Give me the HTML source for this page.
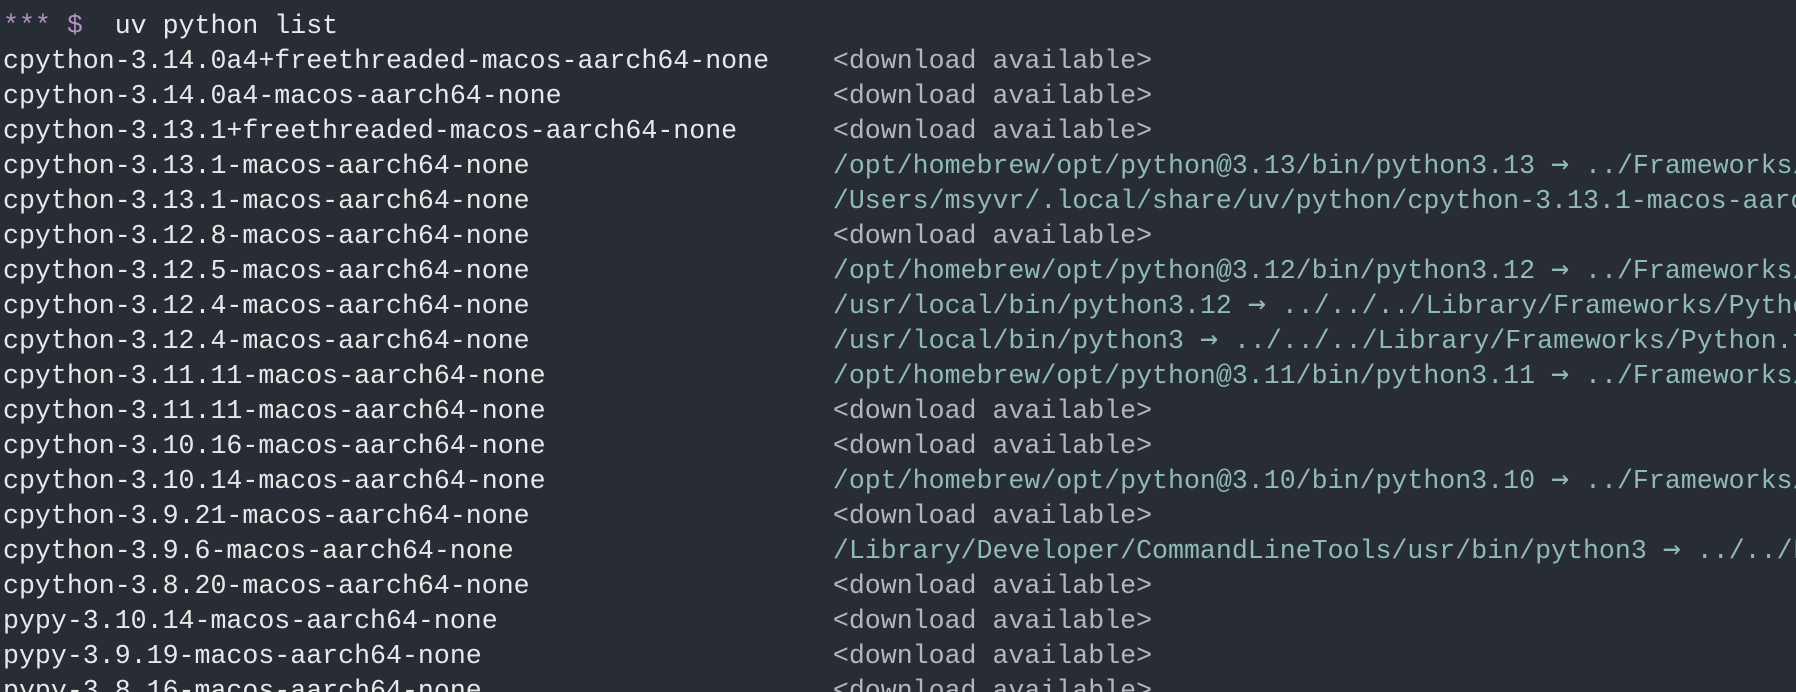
<!DOCTYPE html>
<html><head><meta charset="utf-8"><style>
html,body{margin:0;padding:0;}
body{width:1796px;height:692px;overflow:hidden;background:#282c34;}
pre{margin:0;padding:9px 0 0 3px;width:1793px;height:683px;overflow:hidden;font-family:"Liberation Mono","DejaVu Sans Mono",monospace;font-size:26.6px;line-height:35px;color:#e8e8e8;white-space:pre;}
.p{color:#b093c0}.d{color:#b4b6ba}.t{color:#8fbab7}
.a{font-family:"DejaVu Sans Mono",monospace;font-size:30px;line-height:30px;}
</style></head><body><pre><span class="p">*** $</span>  uv python list
cpython-3.14.0a4+freethreaded-macos-aarch64-none    <span class="d">&lt;download available&gt;</span>
cpython-3.14.0a4-macos-aarch64-none                 <span class="d">&lt;download available&gt;</span>
cpython-3.13.1+freethreaded-macos-aarch64-none      <span class="d">&lt;download available&gt;</span>
cpython-3.13.1-macos-aarch64-none                   <span class="t">/opt/homebrew/opt/python@3.13/bin/python3.13 <span class="a">→</span> ../Frameworks/Python.framework</span>
cpython-3.13.1-macos-aarch64-none                   <span class="t">/Users/msyvr/.local/share/uv/python/cpython-3.13.1-macos-aarch64-none/bin/python3</span>
cpython-3.12.8-macos-aarch64-none                   <span class="d">&lt;download available&gt;</span>
cpython-3.12.5-macos-aarch64-none                   <span class="t">/opt/homebrew/opt/python@3.12/bin/python3.12 <span class="a">→</span> ../Frameworks/Python.framework</span>
cpython-3.12.4-macos-aarch64-none                   <span class="t">/usr/local/bin/python3.12 <span class="a">→</span> ../../../Library/Frameworks/Python.framework</span>
cpython-3.12.4-macos-aarch64-none                   <span class="t">/usr/local/bin/python3 <span class="a">→</span> ../../../Library/Frameworks/Python.framework</span>
cpython-3.11.11-macos-aarch64-none                  <span class="t">/opt/homebrew/opt/python@3.11/bin/python3.11 <span class="a">→</span> ../Frameworks/Python.framework</span>
cpython-3.11.11-macos-aarch64-none                  <span class="d">&lt;download available&gt;</span>
cpython-3.10.16-macos-aarch64-none                  <span class="d">&lt;download available&gt;</span>
cpython-3.10.14-macos-aarch64-none                  <span class="t">/opt/homebrew/opt/python@3.10/bin/python3.10 <span class="a">→</span> ../Frameworks/Python.framework</span>
cpython-3.9.21-macos-aarch64-none                   <span class="d">&lt;download available&gt;</span>
cpython-3.9.6-macos-aarch64-none                    <span class="t">/Library/Developer/CommandLineTools/usr/bin/python3 <span class="a">→</span> ../../Library/Frameworks</span>
cpython-3.8.20-macos-aarch64-none                   <span class="d">&lt;download available&gt;</span>
pypy-3.10.14-macos-aarch64-none                     <span class="d">&lt;download available&gt;</span>
pypy-3.9.19-macos-aarch64-none                      <span class="d">&lt;download available&gt;</span>
pypy-3.8.16-macos-aarch64-none                      <span class="d">&lt;download available&gt;</span>
</pre></body></html>
